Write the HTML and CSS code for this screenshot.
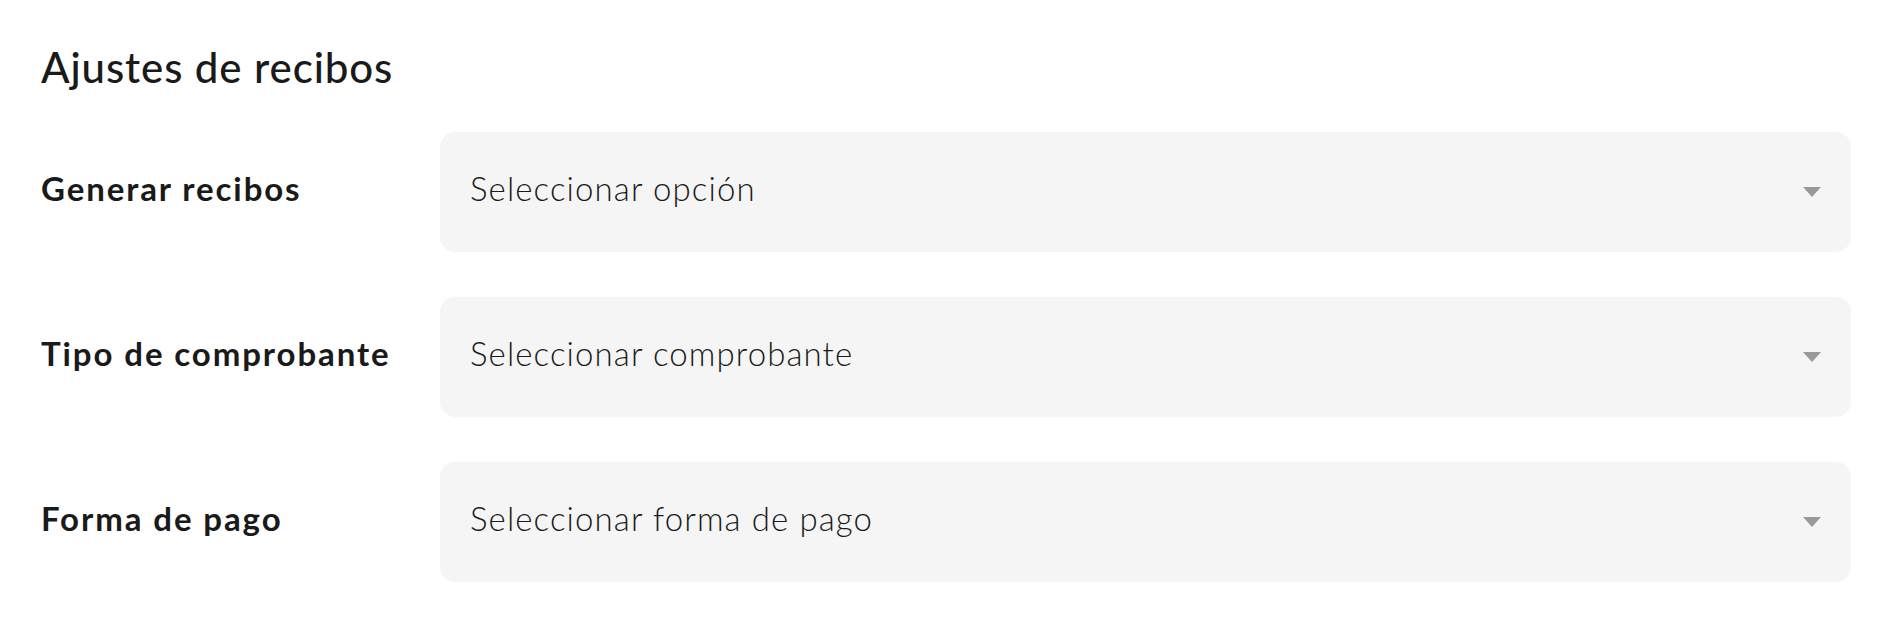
FILE: index.html
```html
<!DOCTYPE html>
<html lang="es">
<head>
<meta charset="utf-8">
<title>Ajustes de recibos</title>
<link rel="stylesheet" href="styles.css">
</head>
<body>
<main class="settings">
  <h1 class="title">Ajustes de recibos</h1>
  <div class="rows">
    <div class="row">
      <label class="label">Generar recibos</label>
      <div class="select">
        <span class="placeholder">Seleccionar opción</span>
        <span class="caret"></span>
      </div>
    </div>
    <div class="row">
      <label class="label">Tipo de comprobante</label>
      <div class="select">
        <span class="placeholder">Seleccionar comprobante</span>
        <span class="caret"></span>
      </div>
    </div>
    <div class="row">
      <label class="label">Forma de pago</label>
      <div class="select">
        <span class="placeholder">Seleccionar forma de pago</span>
        <span class="caret"></span>
      </div>
    </div>
  </div>
</main>
</body>
</html>
```
FILE: styles.css
```css
html, body {
  margin: 0;
  padding: 0;
  background: #ffffff;
}

body {
  font-family: "Lato", "Noto Sans", sans-serif;
  color: #1a1a1a;
}

.settings {
  padding: 43px 42px 0 41px;
}

.title {
  margin: 0;
  font-size: 42px;
  line-height: 48px;
  font-weight: 500;
  letter-spacing: 0.9px;
  color: #1a1a1a;
}

.rows {
  margin-top: 41px;
  display: flex;
  flex-direction: column;
  gap: 45px;
}

.row {
  display: grid;
  grid-template-columns: 399px 1fr;
  align-items: center;
}

.label {
  font-size: 33px;
  font-weight: 700;
  line-height: 40px;
  letter-spacing: 1.9px;
  padding-bottom: 8px;
  color: #1a1a1a;
}

.select {
  height: 120px;
  background: #f5f5f5;
  border-radius: 15px;
  display: flex;
  align-items: center;
  justify-content: space-between;
  padding: 0 30px 0 30px;
  box-sizing: border-box;
}

.placeholder {
  font-size: 33px;
  font-weight: 300;
  line-height: 40px;
  letter-spacing: 1.1px;
  padding-bottom: 8px;
  color: #1a1a1a;
}

.caret {
  width: 0;
  height: 0;
  border-left: 9.5px solid transparent;
  border-right: 9.5px solid transparent;
  border-top: 10px solid #999999;
}
```
